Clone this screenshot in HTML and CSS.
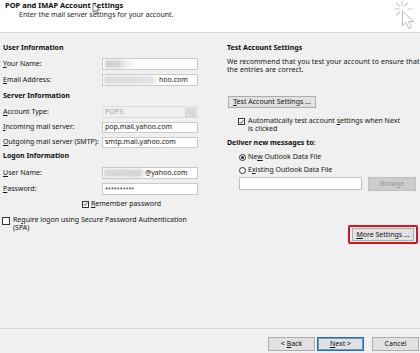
FILE: index.html
```html
<!DOCTYPE html>
<html>
<head>
<meta charset="utf-8">
<link rel="stylesheet" href="styles.css">
</head>
<body>
<div class="header">
  <div class="title">POP and IMAP Account Settings</div>
  <div class="subtitle">Enter the mail server settings for your account.</div>
  <svg class="ptr-small" width="9" height="13" viewBox="0 0 9 13"><path d="M1 1 L1 10.5 L3.2 8.5 L4.8 12 L6.2 11.3 L4.7 8 L7.6 8 Z" fill="#fff" stroke="#555" stroke-width="0.8" stroke-linejoin="round"/></svg>
  <svg class="ptr-click" width="28" height="30" viewBox="0 0 28 30"><g stroke="#c8c8c8" stroke-width="1.1" stroke-linecap="round"><line x1="10" y1="1" x2="10" y2="6"/><line x1="3" y1="9" x2="7.5" y2="9"/><line x1="4.5" y1="3" x2="7.8" y2="6.3"/><line x1="15.5" y1="3" x2="12.3" y2="6.3"/><line x1="4.5" y1="15" x2="7.8" y2="11.7"/><line x1="16" y1="9" x2="20" y2="9"/></g><path d="M10.5 11 L10.5 26 L14 22.6 L16.8 28.5 L19.4 27.3 L16.7 21.5 L21.4 21.5 Z" fill="#fff" stroke="#bdbdbd" stroke-width="1" stroke-linejoin="round"/></svg>
</div>
<div class="content">
  <div class="col-left">
    <div class="sec-h">User Information</div>
    <div class="row r-first"><span class="lbl"><u>Y</u>our Name:</span><span class="inp"><span class="blur b-name"></span></span></div>
    <div class="row"><span class="lbl"><u>E</u>mail Address:</span><span class="inp"><span class="blur b-mail"></span>hoo.com</span></div>
    <div class="sec-h s-gap">Server Information</div>
    <div class="row r-first"><span class="lbl"><u>A</u>ccount Type:</span><span class="inp sel"><span class="dis">POP3</span><span class="dd"><svg width="6" height="5" viewBox="0 0 6 5"><path d="M0.8 1.5 L3 3.7 L5.2 1.5" fill="none" stroke="#c4c4c4" stroke-width="0.9"/></svg></span></span></div>
    <div class="row r-tight"><span class="lbl"><u>I</u>ncoming mail server:</span><span class="inp">pop.mail.yahoo.com</span></div>
    <div class="row r-tight"><span class="lbl"><u>O</u>utgoing mail server (SMTP):</span><span class="inp">smtp.mail.yahoo.com</span></div>
    <div class="sec-h s-gap2">Logon Information</div>
    <div class="row r-first2"><span class="lbl"><u>U</u>ser Name:</span><span class="inp"><span class="blur b-user"></span>@yahoo.com</span></div>
    <div class="row"><span class="lbl"><u>P</u>assword:</span><span class="inp pw">**********</span></div>
    <div class="remember"><span class="cb checked"><svg width="6" height="6" viewBox="0 0 6 6"><path d="M0.8 3 L2.4 4.7 L5.3 1" fill="none" stroke="#222" stroke-width="0.9"/></svg></span><span><u>R</u>emember password</span></div>
    <div class="spa"><span class="cb big"></span><span>Re<u>q</u>uire logon using Secure Password Authentication<br>(SPA)</span></div>
  </div>
  <div class="col-right">
    <div class="sec-h">Test Account Settings</div>
    <p class="para">We recommend that you test your account to ensure that<br>the entries are correct.</p>
    <button class="btn test"><u>T</u>est Account Settings ...</button>
    <div class="auto"><span class="cb checked"><svg width="6" height="6" viewBox="0 0 6 6"><path d="M0.8 3 L2.4 4.7 L5.3 1" fill="none" stroke="#222" stroke-width="0.9"/></svg></span><span>Automatically test account <u>s</u>ettings when Next<br>is clicked</span></div>
    <div class="sec-h d-gap">Deliver new messages to:</div>
    <div class="radio r1"><span class="rd on"></span><span>Ne<u>w</u> Outlook Data File</span></div>
    <div class="radio r2"><span class="rd"></span><span>E<u>x</u>isting Outlook Data File</span></div>
    <div class="browse-row"><span class="inp file"></span><button class="btn browse">Brow<u>s</u>e</button></div>
    <div class="more-wrap"><div class="hl"><button class="btn more"><u>M</u>ore Settings ...</button></div></div>
  </div>
</div>
<div class="footer">
  <button class="btn nav"><span class="lt">&lt;</span> <u>B</u>ack</button>
  <button class="btn nav next"><u>N</u>ext &gt;</button>
  <button class="btn nav cancel">Cancel</button>
</div>
</body>
</html>
```

FILE: styles.css
```css
html, body {
  margin: 0;
  padding: 0;
}
body {
  width: 420px;
  height: 353px;
  overflow: hidden;
  background: #f0f0f0;
  font-family: "Noto Sans", "Liberation Sans", sans-serif;
  font-size: 7px;
  line-height: 8px;
  color: #141414;
  display: flex;
  flex-direction: column;
}
u {
  text-decoration-thickness: 0.5px;
  text-underline-offset: 1px;
}
.header {
  position: relative;
  height: 31px;
  flex: none;
  background: #fff;
  border-bottom: 1px solid #d5d5d5;
  padding: 1px 0 0 5px;
}
.title {
  font-weight: bold;
  font-size: 7.5px;
  line-height: 9px;
  color: #0d0d0d;
}
.subtitle {
  padding-left: 14px;
  margin-top: 1px;
  color: #1e1e1e;
}
.ptr-small {
  position: absolute;
  left: 92px;
  top: 2px;
}
.ptr-click {
  position: absolute;
  right: 0;
  top: 0;
}
.content {
  flex: 1;
  display: flex;
}
.col-left {
  width: 198px;
  padding: 11px 0 0 3px;
  box-sizing: border-box;
  flex: none;
}
.col-right {
  flex: none;
  width: 222px;
  min-width: 0;
  box-sizing: border-box;
  padding: 11px 2px 0 29px;
}
.sec-h {
  font-weight: bold;
  height: 8px;
  color: #0d0d0d;
}
.s-gap { margin-top: 6px; }
.s-gap2 { margin-top: 4px; }
.row {
  display: grid;
  grid-template-columns: 99px 96px;
  align-items: center;
  height: 12px;
  margin-top: 4px;
}
.r-first { margin-top: 6px; }
.r-first2 { margin-top: 7px; }
.r-tight { height: 11.5px; margin-top: 3.5px; }
.lbl {
  white-space: nowrap;
}
.inp {
  display: flex;
  align-items: center;
  height: 100%;
  box-sizing: border-box;
  background: #fff;
  border: 1px solid #c9c9c9;
  padding-left: 2px;
  white-space: nowrap;
  color: #141414;
}
.blur {
  display: inline-block;
  height: 8px;
  filter: blur(0.8px);
}
.b-name {
  width: 30px;
  background: linear-gradient(90deg, #d2d2d2 0 45%, #e6e6e6 60%, #fafafa 100%);
}
.b-mail {
  width: 53px;
  margin-left: -1px;
  margin-right: 2px;
  background: linear-gradient(90deg, #dcdcdc, #e2e2e2 90%, #f4f4f4);
}
.b-user {
  width: 40px;
  margin-left: -1px;
  margin-right: 1px;
  background: linear-gradient(90deg, #d8d8d8, #d6d6d6 90%, #eeeeee);
}
.sel {
  background: #efefef;
  border-color: #dcdcdc;
  justify-content: space-between;
  padding-right: 1px;
}
.dis {
  color: #a3a3a3;
}
.dd {
  width: 11px;
  height: 9px;
  background: #dcdcdc;
  border: 1px solid #d6d6d6;
  box-sizing: border-box;
  display: flex;
  align-items: center;
  justify-content: center;
}
.pw {
  font-size: 5px;
  letter-spacing: 0.2px;
}
.remember {
  display: flex;
  align-items: center;
  height: 8px;
  margin-top: 5px;
  padding-left: 79px;
  gap: 2px;
}
.cb {
  flex: none;
  width: 7px;
  height: 7px;
  box-sizing: border-box;
  border: 1px solid #333;
  background: #fff;
  display: flex;
  align-items: center;
  justify-content: center;
}
.cb svg {
  display: block;
}
.cb.big {
  width: 8px;
  height: 8px;
  margin-top: 1px;
}
.spa {
  display: flex;
  align-items: flex-start;
  gap: 3px;
  margin-top: 8px;
  margin-left: -1px;
  white-space: nowrap;
}
.para {
  margin: 6px 0 0;
  line-height: 7.5px;
  white-space: nowrap;
  letter-spacing: 0.08px;
}
.btn {
  font-family: inherit;
  font-size: 7px;
  line-height: 8px;
  color: #141414;
  background: #e1e1e1;
  border: 1px solid #adadad;
  padding: 0;
  margin: 0;
  box-sizing: border-box;
  white-space: nowrap;
}
.test {
  display: block;
  margin: 23px 0 0 1px;
  width: 88px;
  height: 12px;
}
.auto {
  display: flex;
  align-items: flex-start;
  gap: 3px;
  margin: 9px 0 0 11px;
  white-space: nowrap;
}
.auto .cb {
  margin-top: 1px;
}
.d-gap { margin-top: 6px; }
.radio {
  display: flex;
  align-items: center;
  height: 8px;
  gap: 2px;
  padding-left: 12px;
}
.r1 { margin-top: 6px; }
.r2 { margin-top: 5px; }
.rd {
  width: 7px;
  height: 7px;
  box-sizing: border-box;
  border: 1px solid #333;
  border-radius: 50%;
  background: #fff;
  display: flex;
  align-items: center;
  justify-content: center;
}
.rd.on::after {
  content: "";
  width: 3px;
  height: 3px;
  border-radius: 50%;
  background: #222;
}
.browse-row {
  display: flex;
  align-items: flex-start;
  margin-top: 3px;
  padding-left: 12px;
  gap: 6px;
}
.file {
  width: 123px;
  height: 13px;
  border-color: #bfbfbf;
}
.browse {
  width: 48px;
  height: 14px;
  background: #cccccc;
  border-color: #bfbfbf;
  color: #9a9a9a;
}
.more-wrap {
  display: flex;
  justify-content: flex-end;
  margin-top: 34px;
}
.hl {
  border: 2px solid #d8121f;
  border-radius: 2px;
  padding: 1px 2px;
}
.more {
  display: block;
  width: 62px;
  height: 13px;
}
.footer {
  flex: none;
  height: 25px;
  box-sizing: border-box;
  border-top: 1px solid #d6d6d6;
  display: flex;
  justify-content: flex-end;
  align-items: flex-start;
  padding: 8px 1px 0 0;
  gap: 2px;
}
.nav {
  width: 47px;
  height: 14px;
}
.next {
  border: 1px solid #2a6aa8;
  box-shadow: inset 0 0 0 1px #6a9ccc;
}
.cancel {
  margin-left: 6px;
}
```
